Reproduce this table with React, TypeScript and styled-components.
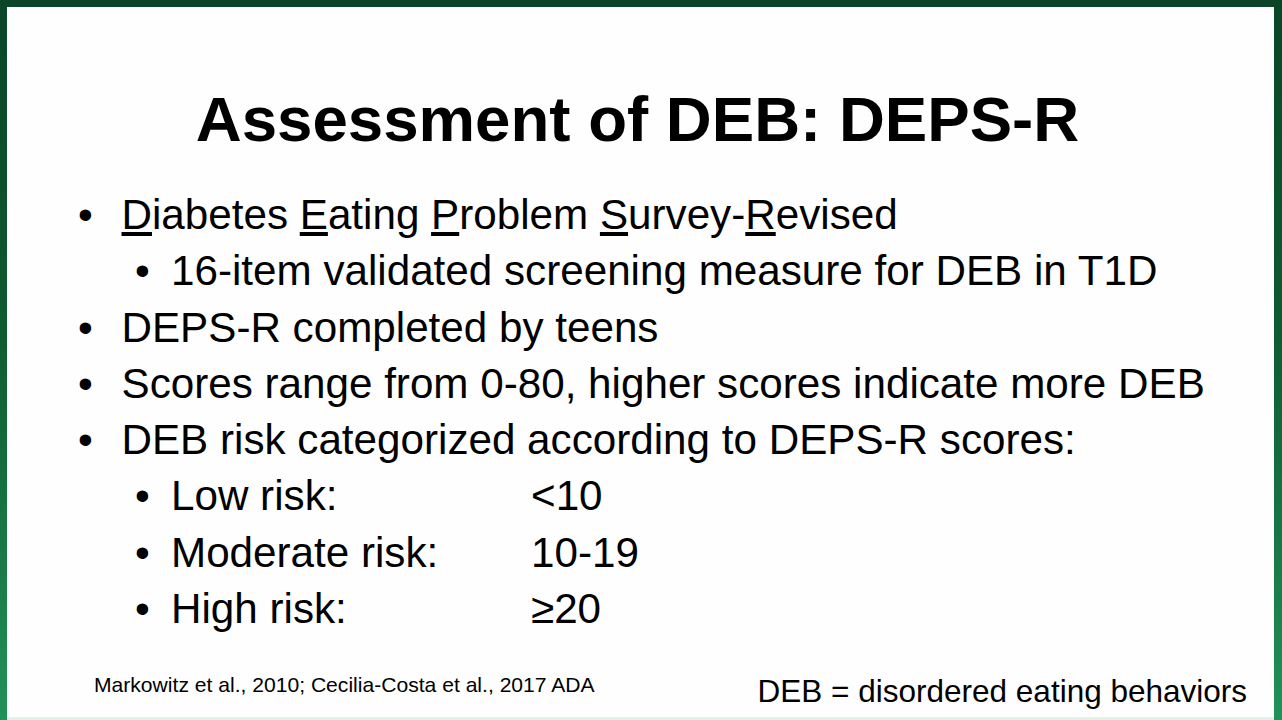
import styled, { createGlobalStyle } from "styled-components";

const GlobalStyle = createGlobalStyle`
  html, body {
    margin: 0;
    padding: 0;
  }
  body {
    width: 1282px;
    height: 720px;
    overflow: hidden;
    font-family: "Liberation Sans", Arial, sans-serif;
    background: linear-gradient(180deg, #0a4527 0%, #0e5a31 45%, #1a7c4a 80%, #21925a 100%);
  }
`;

type Row = { level: 1 | 2; text: React.ReactNode; value?: string };

const rows: Row[] = [
  {
    level: 1,
    text: (
      <>
        <u>D</u>iabetes <u>E</u>ating <u>P</u>roblem <u>S</u>urvey-<u>R</u>evised
      </>
    ),
  },
  { level: 2, text: "16-item validated screening measure for DEB in T1D" },
  { level: 1, text: "DEPS-R completed by teens" },
  { level: 1, text: "Scores range from 0-80, higher scores indicate more DEB" },
  { level: 1, text: "DEB risk categorized according to DEPS-R scores:" },
  { level: 2, text: "Low risk:", value: "<10" },
  { level: 2, text: "Moderate risk:", value: "10-19" },
  { level: 2, text: "High risk:", value: "≥20" },
];

const App = () => {
  return (
    <>
      <GlobalStyle />
      <Slide>
        <Title>Assessment of DEB: DEPS-R</Title>
        <BulletList>
          {rows.map((row, i) => (
            <Item key={i} $level={row.level}>
              <Bullet $level={row.level}>•</Bullet>
              {row.value ? (
                <>
                  <Label>{row.text}</Label>
                  <span>{row.value}</span>
                </>
              ) : (
                <span>{row.text}</span>
              )}
            </Item>
          ))}
        </BulletList>
        <Footer>
          <Citation>Markowitz et al., 2010; Cecilia-Costa et al., 2017 ADA</Citation>
          <Definition>DEB = disordered eating behaviors</Definition>
        </Footer>
      </Slide>
    </>
  );
};

const Slide = styled.div`
  box-sizing: border-box;
  margin: 7px 8px 0 7px;
  height: 713px;
  background: #fefefe;
  border-bottom: 3px solid #e3f1e7;
  display: flex;
  flex-direction: column;
  color: #000;
`;

const Title = styled.h1`
  margin: 76px 0 0 0;
  font-size: 63.6px;
  line-height: 72px;
  font-weight: 700;
  text-align: center;
  white-space: nowrap;
  padding-right: 6px;
`;

const BulletList = styled.ul`
  list-style: none;
  margin: 32px 0 0 0;
  padding: 0;
`;

const Item = styled.li<{ $level: 1 | 2 }>`
  display: flex;
  font-size: 42.2px;
  line-height: 56.3px;
  white-space: nowrap;
  padding-left: ${(p) => (p.$level === 1 ? 71 : 128)}px;
`;

const Bullet = styled.span<{ $level: 1 | 2 }>`
  flex: 0 0 ${(p) => (p.$level === 1 ? 43.5 : 36)}px;
`;

const Label = styled.span`
  flex: 0 0 360px;
`;

const Footer = styled.div`
  margin-top: auto;
  display: flex;
  justify-content: space-between;
  align-items: flex-end;
  padding: 0 27px 8px 87px;
`;

const Citation = styled.div`
  font-size: 21.1px;
  line-height: 24px;
  padding-bottom: 12px;
  white-space: nowrap;
`;

const Definition = styled.div`
  font-size: 31.5px;
  line-height: 36px;
  white-space: nowrap;
`;

export default App;
